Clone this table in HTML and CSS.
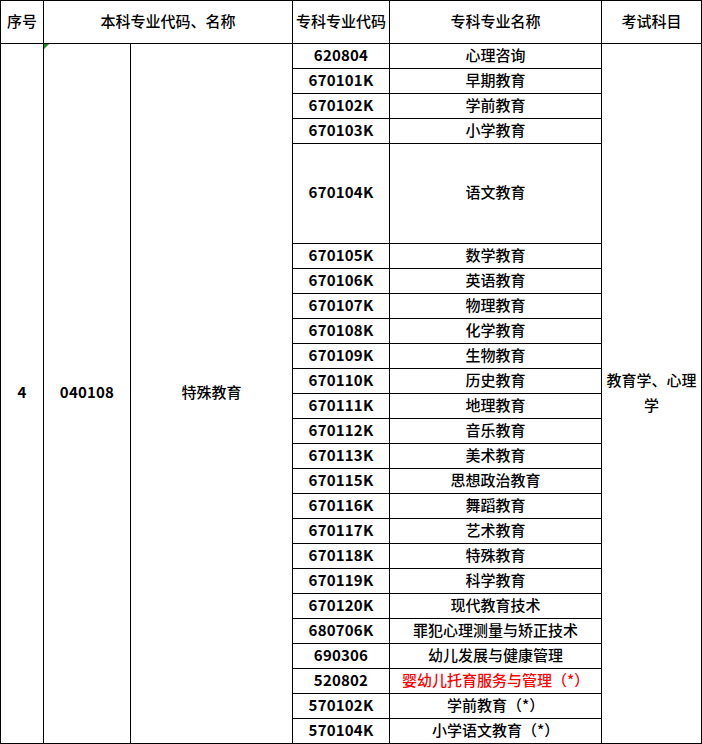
FILE: index.html
```html
<!DOCTYPE html>
<html lang="zh">
<head>
<meta charset="utf-8">
<link rel="stylesheet" href="styles.css">
</head>
<body>
<table class="tbl">
  <colgroup>
    <col class="c1"><col class="c2"><col class="c3"><col class="c4"><col class="c5"><col class="c6">
  </colgroup>
  <thead>
    <tr class="head">
      <th>序号</th>
      <th colspan="2">本科专业代码、名称</th>
      <th>专科专业代码</th>
      <th>专科专业名称</th>
      <th>考试科目</th>
    </tr>
  </thead>
  <tbody>
    <tr>
      <td rowspan="25" class="num">4</td>
      <td rowspan="25" class="num note">040108</td>
      <td rowspan="25" class="name">特殊教育</td>
      <td class="num">620804</td>
      <td class="name">心理咨询</td>
      <td rowspan="25" class="name subj">教育学、心理学</td>
    </tr>
    <tr><td class="num">670101K</td><td class="name">早期教育</td></tr>
    <tr><td class="num">670102K</td><td class="name">学前教育</td></tr>
    <tr><td class="num">670103K</td><td class="name">小学教育</td></tr>
    <tr class="tall"><td class="num">670104K</td><td class="name">语文教育</td></tr>
    <tr><td class="num">670105K</td><td class="name">数学教育</td></tr>
    <tr><td class="num">670106K</td><td class="name">英语教育</td></tr>
    <tr><td class="num">670107K</td><td class="name">物理教育</td></tr>
    <tr><td class="num">670108K</td><td class="name">化学教育</td></tr>
    <tr><td class="num">670109K</td><td class="name">生物教育</td></tr>
    <tr><td class="num">670110K</td><td class="name">历史教育</td></tr>
    <tr><td class="num">670111K</td><td class="name">地理教育</td></tr>
    <tr><td class="num">670112K</td><td class="name">音乐教育</td></tr>
    <tr><td class="num">670113K</td><td class="name">美术教育</td></tr>
    <tr><td class="num">670115K</td><td class="name">思想政治教育</td></tr>
    <tr><td class="num">670116K</td><td class="name">舞蹈教育</td></tr>
    <tr><td class="num">670117K</td><td class="name">艺术教育</td></tr>
    <tr><td class="num">670118K</td><td class="name">特殊教育</td></tr>
    <tr><td class="num">670119K</td><td class="name">科学教育</td></tr>
    <tr><td class="num">670120K</td><td class="name">现代教育技术</td></tr>
    <tr><td class="num">680706K</td><td class="name">罪犯心理测量与矫正技术</td></tr>
    <tr><td class="num">690306</td><td class="name">幼儿发展与健康管理</td></tr>
    <tr><td class="num">520802</td><td class="name red">婴幼儿托育服务与管理（*）</td></tr>
    <tr><td class="num">570102K</td><td class="name">学前教育（*）</td></tr>
    <tr><td class="num">570104K</td><td class="name">小学语文教育（*）</td></tr>
  </tbody>
</table>
</body>
</html>
```
FILE: styles.css
```css
html, body {
  margin: 0;
  padding: 0;
  background: #ffffff;
}
.tbl {
  border-collapse: collapse;
  table-layout: fixed;
  width: 701px;
  font-family: "Noto Sans CJK SC", "Noto Sans", sans-serif;
  font-size: 15px;
  color: #000;
}
.c1 { width: 43px; }
.c2 { width: 87px; }
.c3 { width: 162px; }
.c4 { width: 97px; }
.c5 { width: 212px; }
.c6 { width: 100px; }
.tbl th, .tbl td {
  border: 1px solid #000;
  padding: 0 2px 3px;
  text-align: center;
  vertical-align: middle;
  line-height: 20px;
}
.tbl th {
  font-weight: 500;
  height: 39px;
}
.tbl td {
  height: 21px;
  font-weight: 500;
}
.tbl tr.tall td {
  height: 96px;
}
.num {
  font-weight: 700 !important;
  letter-spacing: 0.2px;
}
.red { color: #ff0000; }
.tbl td.subj {
  padding: 0 3px 3px;
  line-height: 25px;
}
.note { position: relative; }
.note::before {
  content: "";
  position: absolute;
  left: 0;
  top: 0;
  width: 0;
  height: 0;
  border-top: 5px solid #1e8c1e;
  border-right: 5px solid transparent;
}
```
